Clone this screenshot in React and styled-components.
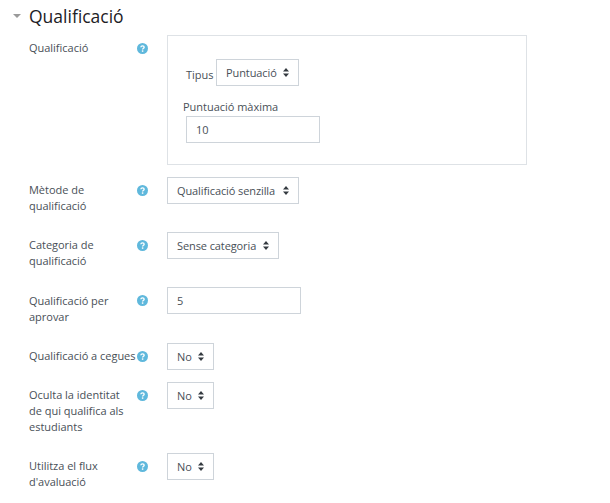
import React from 'react';
import styled, { createGlobalStyle } from 'styled-components';

const GlobalStyle = createGlobalStyle`
  html, body {
    margin: 0;
    background: #fff;
  }
  body {
    font-family: "Open Sans", "Noto Sans", sans-serif;
    font-size: 11px;
    letter-spacing: -0.02px;
    line-height: 16px;
    color: #495057;
  }
`;

const Page = styled.div`
  width: 610px;
  height: 503px;
  overflow: hidden;
  box-sizing: border-box;
  padding-top: 5px;
`;

const SectionHeader = styled.div`
  display: flex;
  align-items: center;
  height: 22px;
  margin-bottom: 8px;
`;

const Caret = styled.span`
  width: 0;
  height: 0;
  margin: 0 8px 0 13px;
  border-left: 4px solid transparent;
  border-right: 4px solid transparent;
  border-top: 4px solid #9a9a9a;
`;

const SectionTitle = styled.h3`
  margin: 0;
  font-size: 17.5px;
  font-weight: 400;
  line-height: 22px;
  letter-spacing: 0;
  color: #1d2125;
`;

const Row = styled.div`
  display: grid;
  grid-template-columns: 108px 30px 1fr;
  margin: 0 0 12px 29px;
  align-items: start;
`;

const Label = styled.div`
  margin-top: ${({ $nudge }) => ($nudge ? 6 : 5)}px;
  padding-bottom: 6px;
  white-space: pre;
`;

const HelpWrap = styled.span`
  display: block;
  width: 11px;
  height: 11px;
  margin-top: 7px;
`;

const Field = styled.div`
  display: flex;
  align-items: flex-start;
`;

const SelectBox = styled.div`
  box-sizing: border-box;
  display: flex;
  align-items: center;
  justify-content: space-between;
  width: ${({ $w }) => $w}px;
  height: 27px;
  padding: 0 9px;
  border: 1px solid #ced4da;
  background: #fff;
  color: #495057;
  letter-spacing: -0.1px;
  white-space: nowrap;
`;

const TextInput = styled.div`
  box-sizing: border-box;
  display: flex;
  align-items: center;
  width: ${({ $w }) => $w}px;
  height: 27px;
  padding: 0 9px;
  border: 1px solid #ced4da;
  background: #fff;
  color: #495057;
`;

const GroupBox = styled.div`
  box-sizing: border-box;
  width: 360px;
  height: 130px;
  padding: 23px 15px 0;
  border: 1px solid #dee2e6;
`;

const TypeRow = styled.div`
  display: flex;
  align-items: flex-end;
  gap: 4px;
  margin: 0 0 13px 3px;
`;

const TypeLabel = styled.span`
  width: 26px;
  padding-bottom: 3px;
`;

const SubLabel = styled.div`
  margin-bottom: 1px;
`;

const InsetInput = styled.div`
  margin-left: 3px;
`;

const HelpIcon = () => (
  <HelpWrap>
    <svg width="11" height="11" viewBox="0 0 12 12">
      <circle cx="6" cy="6" r="6" fill="#5fb8dc" />
      <path d="M4.2 4.7C4.3 3.6 5 3.1 6 3.1c1.1 0 1.8.6 1.8 1.5 0 .7-.4 1.1-1 1.4-.5.3-.7.5-.7 1" fill="none" stroke="#fff" strokeWidth="1.5" />
      <rect x="5.3" y="8" width="1.6" height="1.6" fill="#fff" />
    </svg>
  </HelpWrap>
);

const Updown = () => (
  <svg width="6" height="9" viewBox="0 0 6 9">
    <path d="M3 0 6 3.6H0zM3 9 0 5.4h6z" fill="#343a40" />
  </svg>
);

const Select = ({ w, children }) => (
  <SelectBox $w={w}>
    <span>{children}</span>
    <Updown />
  </SelectBox>
);

const FormRow = ({ label, nudge, children }) => (
  <Row>
    <Label $nudge={nudge}>{label}</Label>
    <HelpIcon />
    <Field>{children}</Field>
  </Row>
);

export default function App() {
  return (
    <Page>
      <GlobalStyle />
      <SectionHeader>
        <Caret />
        <SectionTitle>Qualificació</SectionTitle>
      </SectionHeader>

      <FormRow label="Qualificació">
        <GroupBox>
          <TypeRow>
            <TypeLabel>Tipus</TypeLabel>
            <Select w={83}>Puntuació</Select>
          </TypeRow>
          <SubLabel>Puntuació màxima</SubLabel>
          <InsetInput>
            <TextInput $w={134}>10</TextInput>
          </InsetInput>
        </GroupBox>
      </FormRow>
      <FormRow label={'Mètode de\nqualificació'}>
        <Select w={132}>Qualificació senzilla</Select>
      </FormRow>
      <FormRow label={'Categoria de\nqualificació'}>
        <Select w={112}>Sense categoria</Select>
      </FormRow>
      <FormRow nudge label={'Qualificació per\naprovar'}>
        <TextInput $w={134}>5</TextInput>
      </FormRow>
      <FormRow label="Qualificació a cegues">
        <Select w={47}>No</Select>
      </FormRow>
      <FormRow label={'Oculta la identitat\nde qui qualifica als\nestudiants'}>
        <Select w={47}>No</Select>
      </FormRow>
      <FormRow label={"Utilitza el flux\nd'avaluació"}>
        <Select w={47}>No</Select>
      </FormRow>
    </Page>
  );
}
